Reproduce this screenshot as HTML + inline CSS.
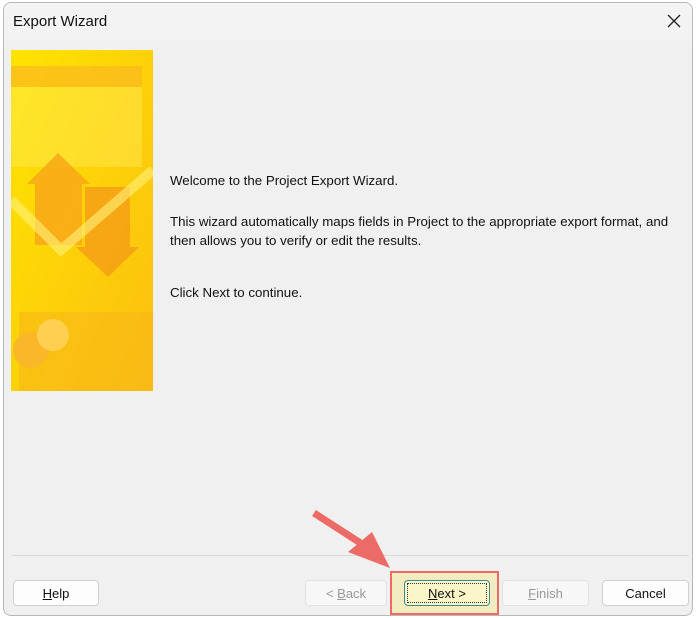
<!DOCTYPE html>
<html><head><style>
body{margin:0;width:696px;height:618px;background:#fff;position:relative;overflow:hidden;font-family:"Segoe UI","Liberation Sans",sans-serif;}
.dlg{position:absolute;left:3px;top:2px;width:688px;height:612px;background:#f0f0f0;border:1px solid #b8b8b8;border-radius:8px;overflow:hidden}
.title{position:absolute;left:0;top:0;right:0;height:38px;background:#f3f3f3}
.title span{position:absolute;left:9px;top:10px;font-size:15px;color:#111}
.x{position:absolute;right:10px;top:10px}
.t{position:absolute;left:166px;font-size:13.3px;color:#111;line-height:19px;white-space:nowrap}
.btn{position:absolute;top:577px;height:26px;background:#fdfdfd;border:1px solid #d0d0d0;border-radius:4px;font-size:13px;text-align:center;line-height:26px;color:#111;box-sizing:border-box}
.dis{color:#999;background:#f7f7f7;border-color:#e2e2e2}
</style></head><body>
<div class="dlg">
<div class="title"><span>Export Wizard</span>
<svg class="x" width="16" height="16" viewBox="0 0 16 16"><path d="M2 2L14 14M14 2L2 14" stroke="#222" stroke-width="1.3"/></svg></div>
<svg style="position:absolute;left:7px;top:47px" width="142" height="341" viewBox="0 0 142 341">
<defs><linearGradient id="g" x1="0" y1="0" x2="1" y2="1"><stop offset="0" stop-color="#ffe400"/><stop offset="1" stop-color="#fbbf10"/></linearGradient></defs>
<rect width="142" height="341" fill="url(#g)"/>
<rect x="0" y="16" width="131" height="21" fill="#fab820" opacity=".7"/>
<rect x="0" y="37" width="131" height="80" fill="#fff070" opacity=".35"/>
<polygon points="16,134 47,103 79,134 71,134 71,195 24,195 24,134" fill="#f8a818" opacity=".85"/>
<polygon points="74,137 119,137 119,197 128,197 97,227 65,197 74,197" fill="#f6a015" opacity=".85"/>
<path d="M0 150 L50 200 L142 120" stroke="#fff27a" stroke-width="10" fill="none" opacity=".6"/>
<rect x="8" y="262" width="134" height="79" fill="#f8b818" opacity=".6"/>
<circle cx="20" cy="300" r="18" fill="#fab828"/><circle cx="42" cy="285" r="16" fill="#ffd050"/>
</svg>
<div class="t" style="top:168px">Welcome to the Project Export Wizard.</div>
<div class="t" style="top:209px">This wizard automatically maps fields in Project to the appropriate export format, and<br>then allows you to verify or edit the results.</div>
<div class="t" style="top:280px">Click Next to continue.</div>
<div style="position:absolute;left:8px;right:3px;top:552px;border-top:1px solid #d8d8d8"></div>
<div class="btn" style="left:9px;width:86px"><u>H</u>elp</div>
<div class="btn dis" style="left:301px;width:82px">&lt; <u>B</u>ack</div>
<div style="position:absolute;left:386px;top:568px;width:109px;height:44px;background:#f3ecc0;border:2px solid #ec6b66;box-sizing:border-box"></div>
<div class="btn" style="left:400px;width:86px;background:#fbf6c8;border:1px solid #3a8a8f"><div style="position:absolute;inset:2px;border:1px dotted #333"></div><u>N</u>ext &gt;</div>
<div class="btn dis" style="left:498px;width:87px"><u>F</u>inish</div>
<div class="btn" style="left:598px;width:87px">Cancel</div>
</div>
<svg style="position:absolute;left:0;top:0" width="696" height="618">
<line x1="314" y1="513" x2="362" y2="544" stroke="#ec6b66" stroke-width="7"/>
<polygon points="372,532 390,568 348,552" fill="#ec6b66"/>
</svg>
</body></html>
